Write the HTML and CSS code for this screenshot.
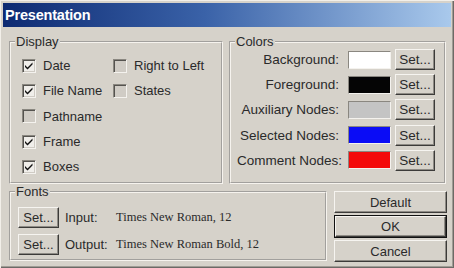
FILE: index.html
```html
<!DOCTYPE html>
<html lang="en">
<head>
    <meta charset="UTF-8">
    <title>Presentation</title>
    <link rel="stylesheet" href="styles.css">
</head>
<body>
    <div class="dialog">
        <div class="titlebar">Presentation</div>

        <div class="row top-row">
            <fieldset class="group display-group">
                <legend>Display</legend>
                <div class="check-cols">
                    <div class="check-col first-col">
                        <label class="check"><span class="box checked"></span>Date</label>
                        <label class="check"><span class="box checked"></span>File Name</label>
                        <label class="check"><span class="box"></span>Pathname</label>
                        <label class="check"><span class="box checked"></span>Frame</label>
                        <label class="check"><span class="box checked"></span>Boxes</label>
                    </div>
                    <div class="check-col">
                        <label class="check"><span class="box"></span>Right to Left</label>
                        <label class="check"><span class="box"></span>States</label>
                    </div>
                </div>
            </fieldset>

            <fieldset class="group colors-group">
                <legend>Colors</legend>
                <div class="color-list">
                    <div class="color-row">
                        <span class="color-label">Background:</span>
                        <span class="swatch white"></span>
                        <button class="btn set-btn">Set...</button>
                    </div>
                    <div class="color-row">
                        <span class="color-label">Foreground:</span>
                        <span class="swatch black"></span>
                        <button class="btn set-btn">Set...</button>
                    </div>
                    <div class="color-row">
                        <span class="color-label">Auxiliary Nodes:</span>
                        <span class="swatch grey"></span>
                        <button class="btn set-btn">Set...</button>
                    </div>
                    <div class="color-row">
                        <span class="color-label">Selected Nodes:</span>
                        <span class="swatch blue"></span>
                        <button class="btn set-btn">Set...</button>
                    </div>
                    <div class="color-row">
                        <span class="color-label">Comment Nodes:</span>
                        <span class="swatch red"></span>
                        <button class="btn set-btn">Set...</button>
                    </div>
                </div>
            </fieldset>
        </div>

        <div class="row bottom-row">
            <fieldset class="group fonts-group">
                <legend>Fonts</legend>
                <div class="font-list">
                    <div class="font-row">
                        <button class="btn font-btn">Set...</button>
                        <span class="font-label">Input:</span>
                        <span class="font-name">Times New Roman, 12</span>
                    </div>
                    <div class="font-row">
                        <button class="btn font-btn">Set...</button>
                        <span class="font-label">Output:</span>
                        <span class="font-name">Times New Roman Bold, 12</span>
                    </div>
                </div>
            </fieldset>

            <div class="actions">
                <button class="btn action-btn">Default</button>
                <div class="default-frame"><button class="btn action-btn">OK</button></div>
                <button class="btn action-btn">Cancel</button>
            </div>
        </div>
    </div>
</body>
</html>
```

FILE: styles.css
```css
html, body {
    margin: 0;
    padding: 0;
    background: #d6d2ca;
}
.dialog {
    box-sizing: border-box;
    width: 454px;
    height: 268px;
    padding: 3px;
    background: #d6d2ca;
    font-family: "Liberation Sans", Arial, sans-serif;
    font-size: 13px;
    color: #2a2a2a;
    box-shadow: inset 1px 1px 0 #f2efe9, inset -1px -1px 0 #6c6a66, inset -2px -2px 0 #a09c95;
}
.titlebar {
    height: 24px;
    line-height: 24px;
    padding-left: 2px;
    background: linear-gradient(to right, #0d2a72 0%, #3a62a8 45%, #a9c9ec 100%);
    color: #fff;
    font-weight: bold;
    font-size: 14.5px;
    letter-spacing: -0.2px;
}
.row {
    display: flex;
}
.top-row {
    margin: 8px 0 0 6px;
    gap: 6px;
    height: 149px;
}
.bottom-row {
    margin: 1px 0 0 6px;
    gap: 7px;
}
.group {
    box-sizing: border-box;
    margin: 0;
    padding: 0;
    border: 2px groove #f6f3ee;
    min-width: 0;
}
.group legend {
    padding: 0 1px;
    margin-left: 4px;
    line-height: 14px;
    height: 14px;
}
.display-group {
    width: 214px;
}
.colors-group {
    width: 217px;
}
.fonts-group {
    width: 318px;
    height: 76px;
}

/* checkboxes */
.check-cols {
    display: flex;
    padding: 4px 0 0 11px;
}
.check-col {
    display: flex;
    flex-direction: column;
}
.first-col {
    width: 91px;
}
.check {
    display: flex;
    align-items: center;
    height: 25.3px;
    white-space: nowrap;
}
.box {
    box-sizing: border-box;
    width: 14px;
    height: 14px;
    margin-right: 7px;
    background: #d0ccc5;
    border: 1px solid;
    border-color: #8a8780 #f4f2ee #f4f2ee #8a8780;
    box-shadow: inset 1px 1px 0 #55534f, inset -1px -1px 0 #cfcbc4;
}
.box.checked {
    background: #f0eeea url("data:image/svg+xml;utf8,<svg xmlns='http://www.w3.org/2000/svg' width='12' height='12'><path d='M2 5 L4.5 7.5 L9.5 2.5 L9.5 4.5 L4.5 9.5 L2 7 Z' fill='%23111'/></svg>") center / 12px 12px no-repeat;
}

/* colours */
.color-list {
    margin-top: -2px;
    padding-left: 6px;
    display: flex;
    flex-direction: column;
}
.color-row {
    display: flex;
    align-items: center;
    height: 25.2px;
    font-size: 13.5px;
}
.color-label {
    width: 102px;
    text-align: right;
    margin-right: 9px;
    white-space: nowrap;
}
.swatch {
    box-sizing: border-box;
    width: 43px;
    height: 18px;
    margin-right: 4px;
    border: 1px solid;
    border-color: #8a8780 #f4f2ee #f4f2ee #8a8780;
}
.swatch.white { background: #ffffff; }
.swatch.black { background: #050505; }
.swatch.grey { background: #c4c4c4; }
.swatch.blue { background: #0a0cf6; }
.swatch.red { background: #f40a0a; }

/* buttons */
.btn {
    box-sizing: border-box;
    margin: 0;
    padding: 0;
    font: inherit;
    color: #2a2a2a;
    background: #d6d2ca;
    border: 1px solid;
    border-color: #f6f4f0 #3c3b39 #3c3b39 #f6f4f0;
    box-shadow: inset -1px -1px 0 #8e8b85;
}
.set-btn {
    width: 40px;
    height: 21px;
}
.font-btn {
    width: 41px;
    height: 21px;
}

/* fonts */
.font-list {
    padding: 5px 0 0 7px;
}
.font-row {
    display: flex;
    align-items: center;
    height: 27px;
}
.font-label {
    width: 51px;
    margin-left: 6px;
}
.font-name {
    font-family: "Liberation Serif", "Times New Roman", serif;
    font-size: 12.5px;
}

/* action buttons */
.actions {
    margin-top: 6px;
    width: 113px;
    display: flex;
    flex-direction: column;
    gap: 2px;
}
.action-btn {
    width: 113px;
    height: 22px;
}
.default-frame {
    box-sizing: border-box;
    height: 23px;
    border: 1px solid #111;
    display: flex;
}
.default-frame .action-btn {
    width: 111px;
    height: 21px;
}
```
